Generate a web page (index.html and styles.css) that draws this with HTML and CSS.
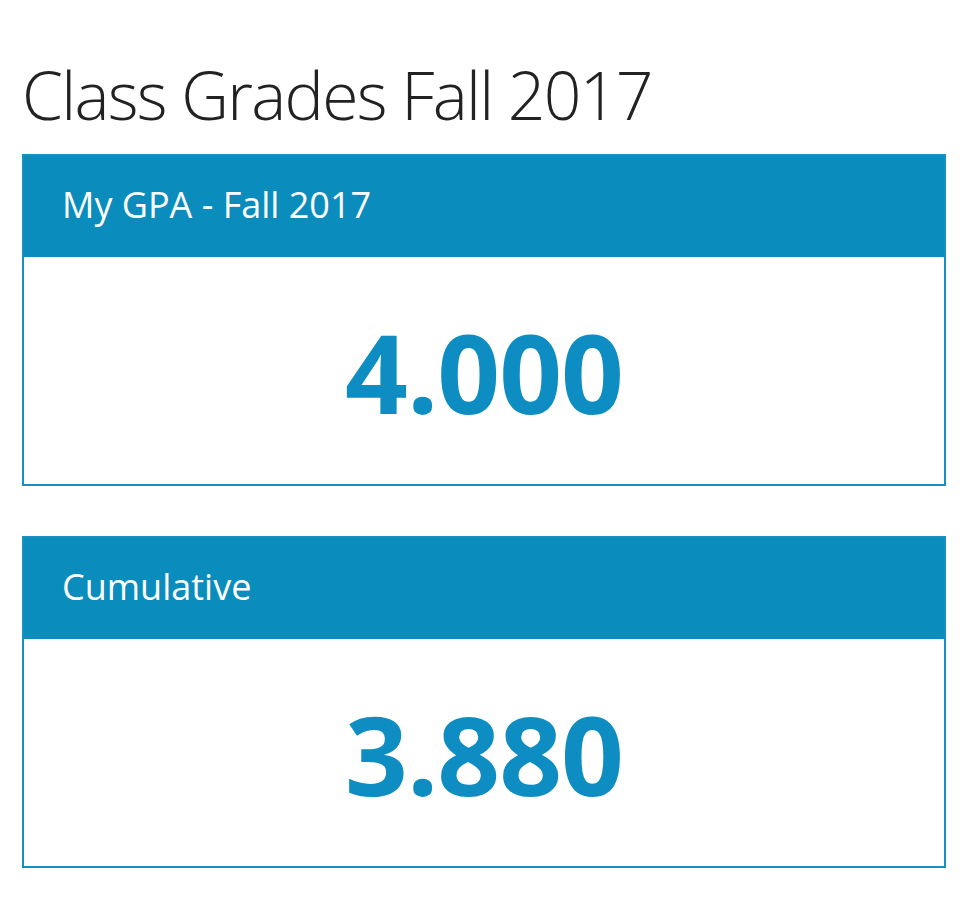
FILE: index.html
```html
<!DOCTYPE html>
<html>
<head>
<meta charset="utf-8">
<link rel="stylesheet" href="styles.css">
</head>
<body>
<main class="page">
  <h1 class="title">Class Grades Fall 2017</h1>
  <section class="card">
    <div class="card-header">My GPA - Fall 2017</div>
    <div class="card-body"><span class="value">4.000</span></div>
  </section>
  <section class="card">
    <div class="card-header">Cumulative</div>
    <div class="card-body"><span class="value">3.880</span></div>
  </section>
</main>
</body>
</html>
```

FILE: styles.css
```css
html, body {
  margin: 0;
  padding: 0;
  background: #ffffff;
}
.page {
  padding: 52px 34px 0 22px;
  font-family: "Open Sans", "Noto Sans", sans-serif;
  display: flex;
  flex-direction: column;
}
.title {
  margin: 0 0 18px 0;
  font-weight: 300;
  font-size: 66px;
  line-height: 84px;
  color: #222222;
  letter-spacing: -1.7px;
}
.card {
  border: 2px solid #1790bf;
  margin-bottom: 50px;
  display: flex;
  flex-direction: column;
}
.card-header {
  background: #0a8cbd;
  color: #ffffff;
  font-size: 36px;
  height: 101px;
  line-height: 97px;
  padding: 0 0 3px 38px;
  box-sizing: border-box;
}
.card-body {
  height: 227px;
  display: flex;
  align-items: center;
  justify-content: center;
}
.value {
  font-weight: 700;
  font-size: 110px;
  color: #0d8dc1;
  line-height: 1;
  letter-spacing: -1px;
}
```
